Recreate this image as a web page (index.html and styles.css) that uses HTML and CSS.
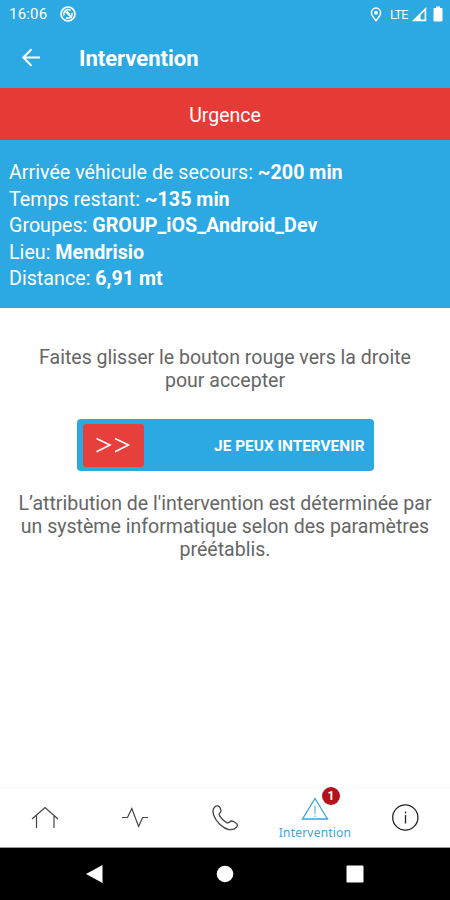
FILE: index.html
```html
<!DOCTYPE html>
<html lang="fr">
<head>
    <meta charset="UTF-8">
    <meta name="viewport" content="width=device-width, initial-scale=1.0">
    <title>Intervention</title>
    <link rel="stylesheet" href="styles.css">
</head>
<body>

    <div class="status-bar">
        <span class="clock">16:06</span>
        <svg width="16" height="16" viewBox="0 0 16 16" fill="none" stroke="#fff">
            <circle cx="8" cy="8" r="7" stroke-width="1.7"/>
            <path d="M4 9.5A4.4 4.4 0 0 1 10.5 4.3M12 7A4.3 4.3 0 0 1 6 11.8M4.5 4.5l7.5 7.5M7 5.5l3 3" stroke-width="1.5"/>
        </svg>
        <div class="status-right">
            <svg width="12" height="15" viewBox="0 0 12 15" fill="none" stroke="#fff">
                <path d="M6 13.7C4 11.2 1.4 8.4 1.4 5.7a4.6 4.6 0 0 1 9.2 0C10.6 8.4 8 11.2 6 13.7z" stroke-width="1.5"/>
                <circle cx="6" cy="5.7" r="1.9" fill="#fff" stroke="none"/>
            </svg>
            <span class="network">LTE</span>
            <svg width="15" height="15" viewBox="0 0 15 15">
                <path fill="#fff" fill-rule="evenodd" d="M14.2 0v14.2H0zM12.6 4v8.6H8.5V8z"/>
            </svg>
            <svg class="battery-icon" width="10" height="16" viewBox="0 0 10 16">
                <path fill="#fff" d="M3 .5h4V2h1.5q1 0 1 1v11.5q0 1-1 1h-7q-1 0-1-1V3q0-1 1-1H3z"/>
            </svg>
        </div>
    </div>

    <div class="header">
        <svg width="20" height="20" viewBox="0 0 20 20" fill="none" stroke="#fff" stroke-width="2">
            <path d="M19 9.5H3M10.5 1.3L2.3 9.5l8.2 8.2"/>
        </svg>
        <h1>Intervention</h1>
    </div>

    <div class="urgency">Urgence</div>

    <div class="details">
        <div>Arrivée véhicule de secours: <b>~200 min</b></div>
        <div>Temps restant: <b>~135 min</b></div>
        <div>Groupes: <b>GROUP_iOS_Android_Dev</b></div>
        <div>Lieu: <b>Mendrisio</b></div>
        <div>Distance: <b>6,91 mt</b></div>
    </div>

    <div class="content">
        <p class="hint">Faites glisser le bouton rouge vers la droite<br>pour accepter</p>

        <div class="slider">
            <div class="slider-button">
                <svg width="36" height="18" viewBox="0 0 36 18" fill="none" stroke="#fff" stroke-width="1.6">
                    <path d="M1.5 2.5L15 9 1.5 15.8M20 2.5L33.5 9 20 15.8"/>
                </svg>
            </div>
            <span class="slider-label">JE PEUX INTERVENIR</span>
        </div>

        <p class="note">L’attribution de l'intervention est déterminée par<br>un système informatique selon des paramètres<br>préétablis.</p>
    </div>

    <div class="tab-bar">
        <div class="tab">
            <svg width="30" height="30" viewBox="0 0 30 30" fill="none" stroke="#444" stroke-width="1.2">
                <path d="M2 16L15 4.5 28 16M6.5 12.5V25M24 12.5V25"/>
            </svg>
        </div>
        <div class="tab">
            <svg width="30" height="30" viewBox="0 0 30 30" fill="none" stroke="#444" stroke-width="1.2">
                <path d="M2 14.5h5.5l4.3-9 6.8 18 4-9H28"/>
            </svg>
        </div>
        <div class="tab">
            <svg width="30" height="30" viewBox="0 0 30 30" fill="none" stroke="#444" stroke-width="1.3">
                <path d="M4.5 4.2C6.8 2 9 2.8 10.2 5c1 2 1.4 3.4-.2 4.8-1.2 1-1.2 1.7-.4 3 2 3.2 4 5.3 7 6.8 1.3.7 2 .5 3-.6 1.3-1.5 2.6-1.3 4.3-.3 3.3 1.9 4.7 3.4 2.6 5.6C22.5 28.3 16 27.3 10 21.5S1 8.3 4.5 4.2z"/>
            </svg>
        </div>
        <div class="tab active">
            <div class="alert-icon">
                <svg width="28" height="24" viewBox="0 0 28 24" fill="none" stroke="#3aa5dc" stroke-width="1.3">
                    <path d="M14 1.5L26.5 22H1.5z"/>
                    <path d="M14 8.5V17M14 18.5V20" stroke-width="1"/>
                </svg>
                <span class="badge">1</span>
            </div>
            <span class="tab-label">Intervention</span>
        </div>
        <div class="tab">
            <svg width="30" height="30" viewBox="0 0 30 30" fill="none" stroke="#222" stroke-width="1.3">
                <circle cx="15.3" cy="14.5" r="12.6"/>
                <path d="M15.5 12v8.5M15.5 8.5v2"/>
            </svg>
        </div>
    </div>

    <div class="system-nav">
        <div><svg width="20" height="20" viewBox="0 0 20 20"><path fill="#fff" d="M17.5 1v18L1 10z"/></svg></div>
        <div><svg width="18" height="18" viewBox="0 0 18 18"><circle cx="9" cy="9" r="8.3" fill="#fff"/></svg></div>
        <div><svg width="18" height="18" viewBox="0 0 18 18"><rect x=".5" y=".5" width="17" height="17" rx="1" fill="#fff"/></svg></div>
    </div>

</body>
</html>
```
FILE: styles.css
```css
* {
    box-sizing: border-box;
}

body {
    display: flex;
    flex-direction: column;
    height: 900px;
    margin: 0;
    font-family: Roboto, "Liberation Sans", sans-serif;
    background-color: #fefefe;
    color: #fff;
}

svg {
    display: block;
    flex-shrink: 0;
}

/* Android status bar */
.status-bar {
    display: flex;
    align-items: center;
    height: 28px;
    padding: 0 7px 0 9px;
    background-color: #2ca8e2;
}

.clock {
    width: 51px;
    font-size: 15px;
    letter-spacing: 0.2px;
}

.status-right {
    display: flex;
    align-items: center;
    margin-left: auto;
}

.network {
    width: 22px;
    margin-left: 8px;
    font-size: 12.5px;
    letter-spacing: -0.6px;
}

.battery-icon {
    margin-left: 6px;
}

.header {
    display: flex;
    align-items: center;
    height: 60px;
    padding-left: 21px;
    background-color: #2ca8e2;
}

.header h1 {
    margin: 0 0 0 38px;
    font-size: 22px;
    font-weight: bold;
}

.urgency {
    height: 52px;
    line-height: 56px;
    font-size: 19.5px;
    text-align: center;
    background-color: #e63a37;
}

.details {
    height: 168px;
    padding: 20px 9px;
    font-size: 19.7px;
    line-height: 26.5px;
    background-color: #2ca8e2;
}

.content {
    flex: 1;
    display: flex;
    flex-direction: column;
    align-items: center;
    color: #666;
    font-size: 19.55px;
    line-height: 23px;
    text-align: center;
    white-space: nowrap;
}

.content p {
    margin: 0;
}

.content .hint {
    margin: 38px 0 27px;
}

.slider {
    display: flex;
    align-items: center;
    justify-content: space-between;
    width: 297px;
    height: 52px;
    padding: 0 9px 0 6px;
    border-radius: 4px;
    background-color: #2ca8e2;
}

.slider-button {
    display: flex;
    align-items: center;
    justify-content: center;
    width: 61px;
    height: 43px;
    border-radius: 3px;
    background-color: #e63f3c;
}

.slider-label {
    padding-top: 3px;
    color: #fff;
    font-size: 15.4px;
    font-weight: bold;
}

.content .note {
    margin-top: 21px;
}

/* App tabs */
.tab-bar {
    display: flex;
    height: 61px;
    border-top: 1px solid #f9f9f9;
    border-bottom: 1px solid #999;
    background-color: #fff;
}

.tab {
    flex: 1;
    display: flex;
    flex-direction: column;
    align-items: center;
    justify-content: center;
}

.active {
    color: #3aa5dc;
    justify-content: flex-start;
    padding-top: 9px;
}

.alert-icon {
    position: relative;
}

.badge {
    position: absolute;
    top: -10px;
    left: 21px;
    width: 18px;
    height: 18px;
    border-radius: 50%;
    background-color: #b5101b;
    color: #fff;
    font-size: 12px;
    font-weight: bold;
    line-height: 18px;
    text-align: center;
}

.tab-label {
    margin-top: 4px;
    font-family: "Noto Sans", sans-serif;
    font-size: 12px;
    line-height: 16px;
    letter-spacing: 0.2px;
}

/* Android navigation buttons */
.system-nav {
    display: flex;
    justify-content: center;
    height: 52px;
    background-color: #000;
}

.system-nav div {
    display: flex;
    align-items: center;
    justify-content: center;
    width: 130px;
}
```
